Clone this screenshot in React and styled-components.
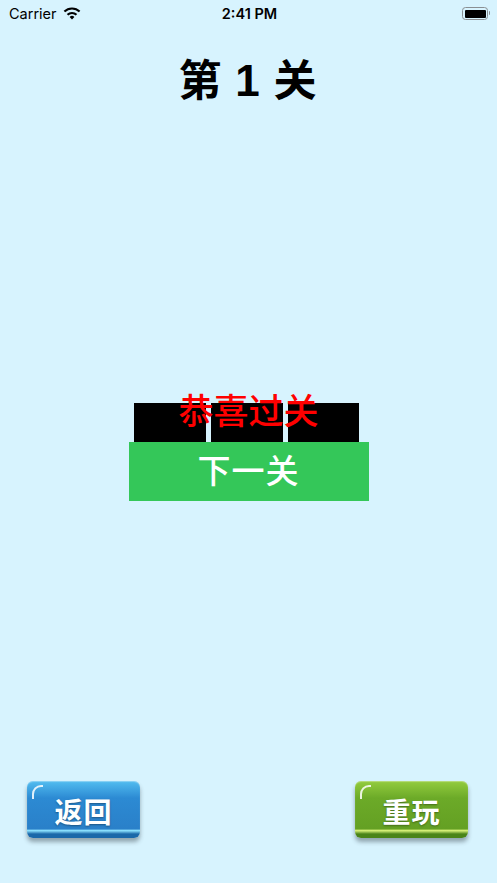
import React from "react";
import styled, { createGlobalStyle } from "styled-components";

const GlobalStyle = createGlobalStyle`
  html, body {
    margin: 0;
    padding: 0;
    background: #d7f3fe;
  }
  #root {
    min-height: 100vh;
  }
`;

const Page = styled.div`
  height: 883px;
  display: flex;
  flex-direction: column;
  background: #d7f3fe;
  font-family: "Noto Sans CJK SC", "Noto Sans", sans-serif;
  overflow: hidden;
`;

const StatusBar = styled.div`
  height: 26px;
  display: grid;
  grid-template-columns: 1fr auto 1fr;
  align-items: center;
  padding: 0 7px 0 9px;
  font-family: "Inter", "Liberation Sans", sans-serif;
  font-size: 14.5px;
  color: #000;
`;

const Carrier = styled.div`
  display: flex;
  align-items: center;
  gap: 6px;
`;

const Time = styled.div`
  font-weight: 600;
`;

const BatteryWrap = styled.div`
  justify-self: end;
  display: flex;
  align-items: center;
  gap: 1px;
`;

const BatteryBody = styled.div`
  width: 21px;
  height: 8px;
  border: 1.5px solid #8a8f93;
  border-radius: 3.5px;
  padding: 1.5px;
  background-clip: content-box;
  background-color: #000;
`;

const BatteryNub = styled.div`
  width: 1.5px;
  height: 4px;
  background: #8a8f93;
  border-radius: 0 1px 1px 0;
`;

const Title = styled.h1`
  margin: 25px 0 0;
  height: 52px;
  line-height: 52px;
  text-align: center;
  font-size: 43px;
  font-weight: 700;
  color: #000;
  letter-spacing: 2px;
`;

const Digit = styled.span`
  font-family: "Liberation Sans", "Noto Sans", sans-serif;
  font-size: 44px;
  font-weight: 700;
`;

const Middle = styled.div`
  position: relative;
  margin-top: 300px;
  display: flex;
  flex-direction: column;
  align-items: center;
`;

const BlockRow = styled.div`
  display: flex;
  gap: 5px;
  height: 39px;
  margin-right: 5px;
`;

const Block = styled.div`
  width: ${(p) => p.$w}px;
  height: 39px;
  background: #000;
`;

const Congrats = styled.div`
  position: absolute;
  left: 50%;
  top: -14px;
  transform: translateX(-50%);
  white-space: nowrap;
  color: #ff0000;
  font-size: 35px;
  font-weight: 500;
  line-height: 40px;
`;

const NextButton = styled.button`
  width: 240px;
  height: 59px;
  border: none;
  background: #34c759;
  color: #fff;
  font-family: inherit;
  font-size: 33px;
  font-weight: 500;
  line-height: 1;
  letter-spacing: 1px;
  padding: 0 0 4px;
  cursor: pointer;
`;

const Spacer = styled.div`
  flex: 1;
`;

const Footer = styled.div`
  display: flex;
  justify-content: space-between;
  padding: 0 29px 45px 27px;
`;

const palette = {
  blue: {
    top: "#52bdf0",
    mid: "#2c8ad3",
    low: "#2a80c9",
    glow: "#8fe4ff",
    rim: "#1b68a9",
  },
  green: {
    top: "#93cc3e",
    mid: "#6caa28",
    low: "#64a023",
    glow: "#d9f27a",
    rim: "#4a8418",
  },
};

const GlossButton = styled.button`
  position: relative;
  width: 113px;
  height: 57px;
  border: none;
  border-radius: 6px;
  padding: 2px 0 0;
  cursor: pointer;
  font-family: inherit;
  font-size: 28px;
  font-weight: 700;
  color: #fff;
  letter-spacing: 1px;
  text-shadow: 0 1px 2px rgba(0, 0, 0, 0.35);
  background: linear-gradient(
    to bottom,
    ${(p) => palette[p.$tone].top} 0%,
    ${(p) => palette[p.$tone].mid} 30%,
    ${(p) => palette[p.$tone].low} 84%,
    ${(p) => palette[p.$tone].glow} 87%,
    ${(p) => palette[p.$tone].rim} 93%,
    ${(p) => palette[p.$tone].rim} 100%
  );
  box-shadow: 0 4px 4px rgba(60, 70, 80, 0.45),
    inset 0 1px 1px rgba(255, 255, 255, 0.35);
`;

const Shine = styled.span`
  position: absolute;
  left: 5px;
  top: 4px;
  width: 9px;
  height: 12px;
  border-top: 2px solid rgba(255, 255, 255, 0.85);
  border-left: 2px solid rgba(255, 255, 255, 0.85);
  border-top-left-radius: 9px;
`;

const WifiIcon = () => (
  <svg width="18" height="13" viewBox="0 0 18 13">
    <path d="M9 12.5 L6.6 9.9 A3.4 3.4 0 0 1 11.4 9.9 Z" fill="#000" />
    <path
      d="M4.5 7.8 A6.4 6.4 0 0 1 13.5 7.8"
      stroke="#000"
      strokeWidth="2.1"
      fill="none"
    />
    <path
      d="M1.4 4.6 A10.8 10.8 0 0 1 16.6 4.6"
      stroke="#000"
      strokeWidth="2.1"
      fill="none"
    />
  </svg>
);

export default function App() {
  return (
    <Page>
      <GlobalStyle />
      <StatusBar>
        <Carrier>
          Carrier
          <WifiIcon />
        </Carrier>
        <Time>2:41 PM</Time>
        <BatteryWrap>
          <BatteryBody />
          <BatteryNub />
        </BatteryWrap>
      </StatusBar>

      <Title>
        第 <Digit>1</Digit> 关
      </Title>

      <Middle>
        <BlockRow>
          <Block $w={72} />
          <Block $w={72} />
          <Block $w={71} />
        </BlockRow>
        <NextButton>下一关</NextButton>
        <Congrats>恭喜过关</Congrats>
      </Middle>

      <Spacer />

      <Footer>
        <GlossButton $tone="blue">
          <Shine />
          返回
        </GlossButton>
        <GlossButton $tone="green">
          <Shine />
          重玩
        </GlossButton>
      </Footer>
    </Page>
  );
}
